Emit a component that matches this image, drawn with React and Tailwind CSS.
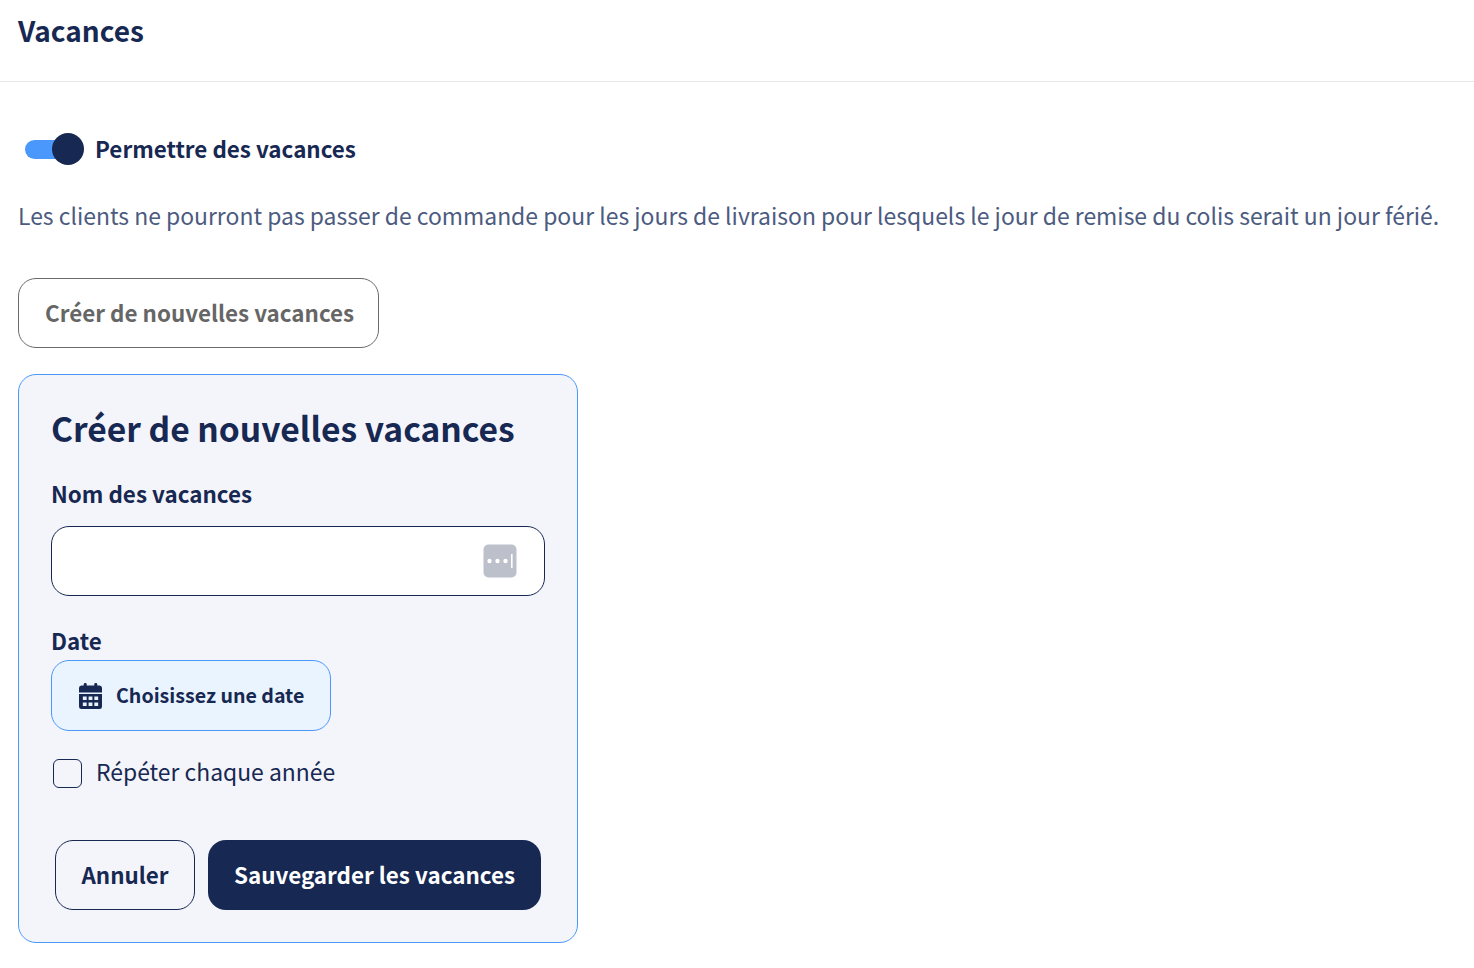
import React from "react";

function CalendarIcon() {
  return (
    <svg width="23" height="26" viewBox="0 0 24 26" preserveAspectRatio="none" className="shrink-0">
      <rect x="5" y="0" width="3" height="5" rx="1.2" fill="#172853" />
      <rect x="16" y="0" width="3" height="5" rx="1.2" fill="#172853" />
      <path fill="#172853" fillRule="evenodd" d="M2.5 2.5h19A2.5 2.5 0 0 1 24 5v4.5H0V5a2.5 2.5 0 0 1 2.5-2.5ZM0 11h24v12.5a2.5 2.5 0 0 1-2.5 2.5h-19A2.5 2.5 0 0 1 0 23.5V11Zm4 2.500v3.500h4v-3.500H4Zm6 0v3.500h4v-3.500h-4Zm6 0v3.500h4v-3.500h-4ZM4 19.500V23h4v-3.500H4Zm6 0V23h4v-3.500h-4Zm6 0V23h4v-3.500h-4Z" />
    </svg>
  );
}

function KeyIcon() {
  return (
    <svg width="34" height="34" viewBox="0 0 34 34" className="shrink-0">
      <rect x="0.500" y="0.500" width="33" height="33" rx="5" fill="#bcc0ca" />
      <circle cx="6.500" cy="17" r="2.200" fill="#fff" />
      <circle cx="14.500" cy="17" r="2.200" fill="#fff" />
      <circle cx="22.500" cy="17" r="2.200" fill="#fff" />
      <rect x="28" y="10" width="1.600" height="14" fill="#fff" />
    </svg>
  );
}

export default function App() {
  return (
    <div className="min-h-[968px] bg-white font-['Noto_Sans_CJK_JP','Liberation_Sans',sans-serif] text-[#172853]">
      <header className="h-[82px] border-b border-[#e6e6e6] pl-[18px] pt-[8px]">
        <h1 className="text-[28px] leading-[44px] font-semibold">Vacances</h1>
      </header>

      <main className="pl-[18px]">
        <div className="mt-[51px] flex h-[32px] items-center pl-[7px]">
          <div className="relative h-[19px] w-[59px]">
            <div className="h-[19px] w-[40px] rounded-full bg-[#4a98fb]" />
            <div className="absolute -top-[6.5px] right-0 size-[32px] rounded-full bg-[#172853]" />
          </div>
          <span className="ml-[11px] pb-[2px] text-[22.4px] leading-[30px] font-semibold">Permettre des vacances</span>
        </div>

        <p className="mt-[34px] text-[22.93px] leading-[32px] whitespace-nowrap text-[#4c5b80]">
          Les clients ne pourront pas passer de commande pour les jours de livraison pour lesquels le jour de remise du colis serait un jour férié.
        </p>

        <button className="mt-[47px] flex h-[70px] w-[361px] items-center rounded-[18px] border border-[#6b6b6b] bg-white pl-[26px] text-[22.4px] font-semibold whitespace-nowrap text-[#666666]">
          Créer de nouvelles vacances
        </button>

        <section className="mt-[26px] h-[569px] w-[560px] rounded-[18px] border border-[#4a98fb] bg-[#f4f5fa] px-[32px] pt-[27px]">
          <h2 className="text-[33.6px] leading-[52px] font-semibold whitespace-nowrap">Créer de nouvelles vacances</h2>

          <label className="mt-[23px] block text-[22.4px] leading-[32px] font-semibold">Nom des vacances</label>
          <div className="mt-[17px] flex h-[70px] w-[494px] items-center justify-end rounded-[18px] border border-[#172853] bg-white pr-[27px]">
            <KeyIcon />
          </div>

          <label className="mt-[28px] block text-[22.4px] leading-[32px] font-semibold">Date</label>
          <button className="mt-[4px] flex h-[71px] w-[280px] items-center rounded-[18px] border border-[#4a98fb] bg-[#e9f4fe] pl-[27px] text-[19.6px] font-semibold whitespace-nowrap">
            <CalendarIcon />
            <span className="ml-[14px] pb-[2px]">Choisissez une date</span>
          </button>

          <div className="mt-[26px] flex h-[32px] items-center pl-[2px]">
            <div className="size-[29px] rounded-[6px] border border-[#172853] bg-transparent" />
            <span className="ml-[14px] pb-[4px] text-[22.9px] leading-[30px]">Répéter chaque année</span>
          </div>

          <div className="mt-[51px] flex gap-[13px] pl-[4px]">
            <button className="h-[70px] w-[140px] rounded-[18px] border border-[#172853] text-[22.4px] font-semibold">Annuler</button>
            <button className="h-[70px] w-[333px] rounded-[18px] bg-[#172853] text-[22.4px] font-semibold whitespace-nowrap text-white">Sauvegarder les vacances</button>
          </div>
        </section>
      </main>
    </div>
  );
}
